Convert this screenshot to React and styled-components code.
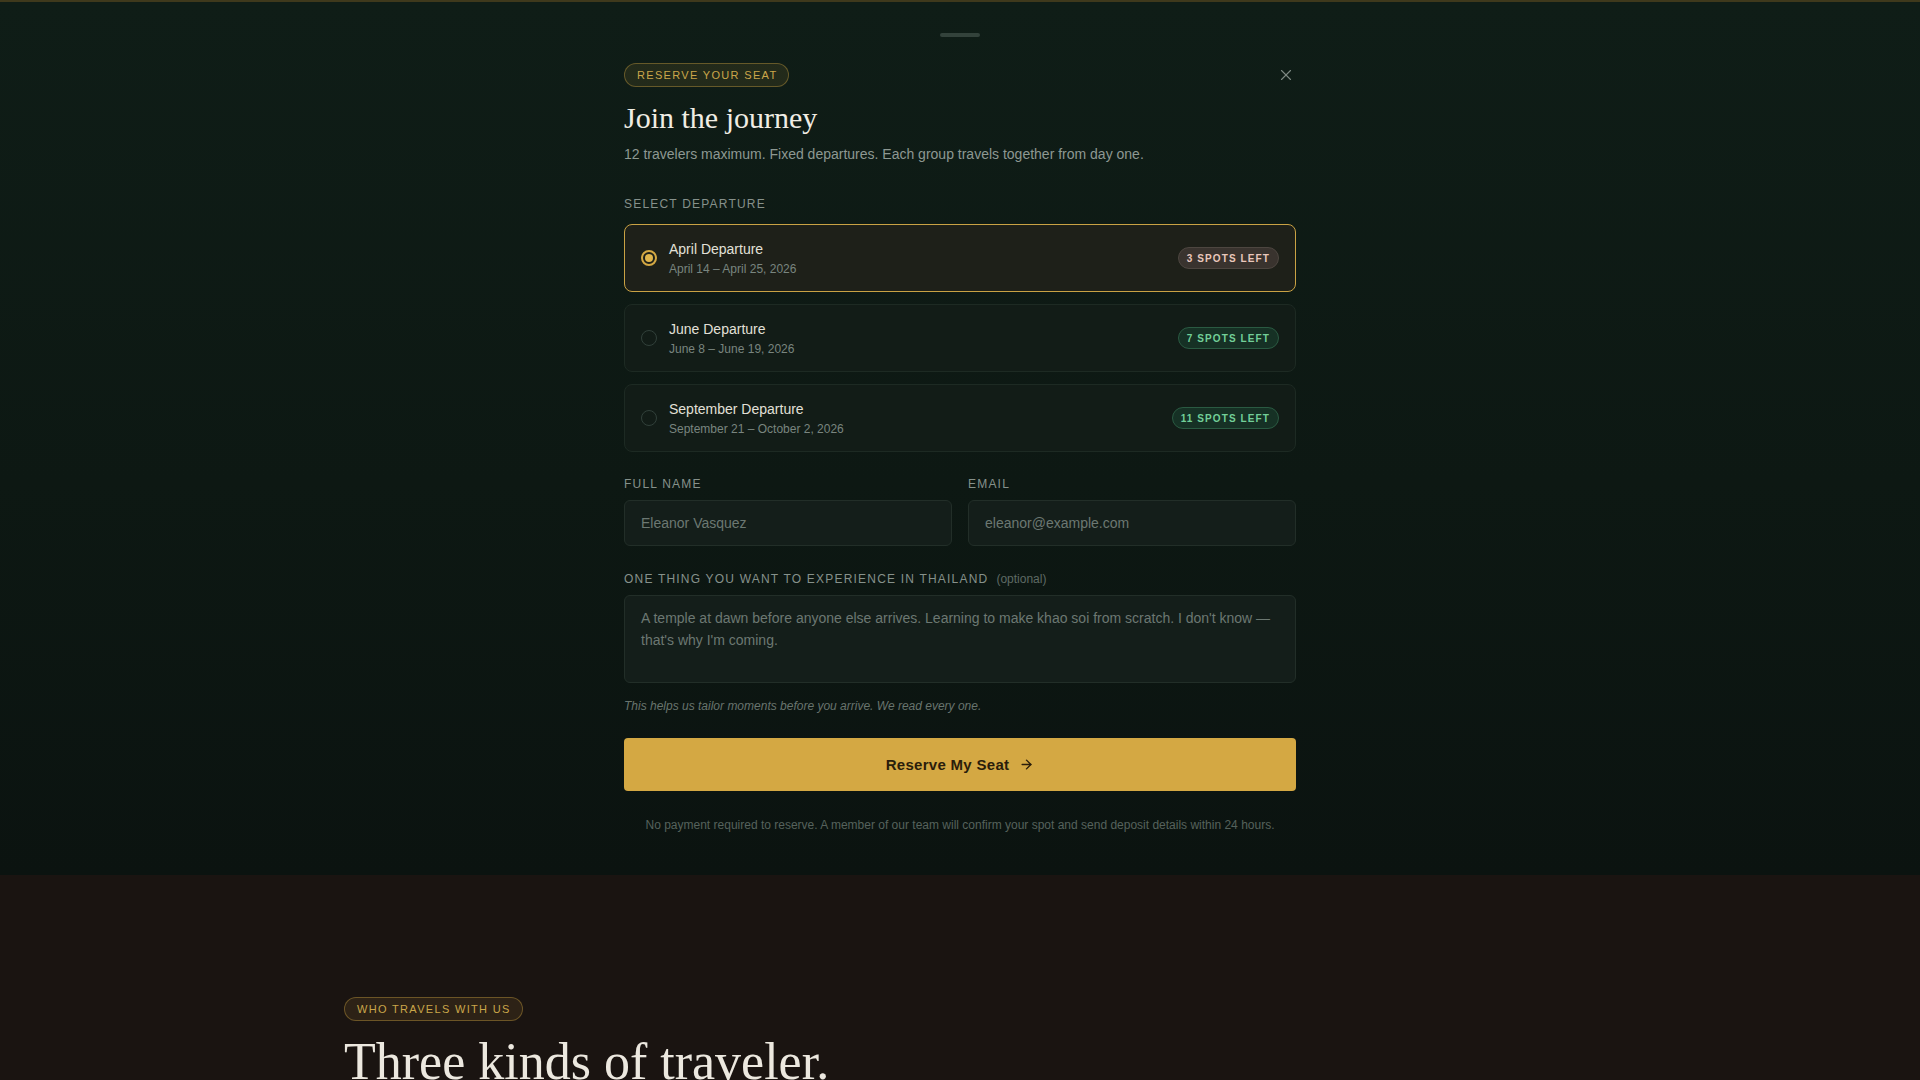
import React, { useState } from 'react';
import styled, { createGlobalStyle } from 'styled-components';
import { X, ArrowRight } from 'lucide-react';

const GlobalStyle = createGlobalStyle`
  * {
    box-sizing: border-box;
  }

  body {
    margin: 0;
    background: #1a1411;
    font-family: "Liberation Sans", Arial, sans-serif;
    color: #e8e6df;
  }
`;

const Sheet = styled.section`
  background: linear-gradient(180deg, #0f1d17 0%, #0d1813 55%, #0b1310 100%);
  border-top: 2px solid rgba(212, 168, 67, 0.26);
  padding: 31px 24px 42px;
`;

const Handle = styled.div`
  width: 40px;
  height: 4px;
  border-radius: 2px;
  background: #33423b;
  margin: 0 auto 26px;
`;

const Panel = styled.div`
  max-width: 672px;
  margin: 0 auto;
`;

const Header = styled.div`
  display: flex;
  align-items: center;
  justify-content: space-between;
`;

const Eyebrow = styled.span`
  display: inline-flex;
  align-items: center;
  height: 24px;
  padding: 0 11px 0 12px;
  border-radius: 999px;
  border: 1px solid rgba(212, 168, 67, 0.38);
  background: rgba(212, 168, 67, 0.1);
  color: #caa64a;
  font-size: 11px;
  letter-spacing: 0.12em;
  text-transform: uppercase;
`;

const CloseButton = styled.button`
  width: 20px;
  height: 20px;
  padding: 0;
  border: none;
  background: none;
  color: #7d8983;
  display: flex;
  align-items: center;
  justify-content: center;
  cursor: pointer;
`;

const Title = styled.h2`
  margin: 13px 0 0;
  font-family: "Liberation Serif", "Times New Roman", serif;
  font-weight: 400;
  font-size: 30px;
  line-height: 36px;
  color: #f0ede4;
`;

const Subtitle = styled.p`
  margin: 8px 0 0;
  font-size: 14px;
  line-height: 20px;
  color: #8d9892;
`;

const FieldLabel = styled.div`
  margin-top: ${(p) => p.$top || 24}px;
  margin-bottom: ${(p) => p.$bottom || 8}px;
  font-size: 12px;
  line-height: 16px;
  letter-spacing: 0.1em;
  text-transform: uppercase;
  color: #86918b;
`;

const Optional = styled.span`
  margin-left: 8px;
  font-size: 12px;
  letter-spacing: 0;
  text-transform: none;
  color: #5e6a64;
`;

const Options = styled.div`
  display: flex;
  flex-direction: column;
  gap: 12px;
`;

const Option = styled.label`
  display: flex;
  align-items: center;
  gap: 12px;
  padding: 14px 16px;
  border-radius: 8px;
  cursor: pointer;
  border: 1px solid ${(p) => (p.$active ? '#c9a244' : '#1d2a23')};
  background: ${(p) => (p.$active ? '#1e2019' : '#121c17')};
`;

const Radio = styled.span`
  width: 16px;
  height: 16px;
  border-radius: 50%;
  flex-shrink: 0;
  display: flex;
  align-items: center;
  justify-content: center;
  border: ${(p) => (p.$active ? '2px solid #d4a843' : '1.5px solid #31403a')};

  &::after {
    content: '';
    width: 8px;
    height: 8px;
    border-radius: 50%;
    background: ${(p) => (p.$active ? '#e0b54c' : 'transparent')};
  }
`;

const OptionInfo = styled.div`
  flex: 1;
`;

const OptionName = styled.div`
  font-size: 14px;
  line-height: 20px;
  color: #e2e0d8;
`;

const OptionDates = styled.div`
  margin-top: 2px;
  font-size: 12px;
  line-height: 16px;
  color: #79857f;
`;

const Spots = styled.span`
  display: inline-flex;
  align-items: center;
  height: 22px;
  padding: 0 8px;
  border-radius: 999px;
  font-size: 10px;
  font-weight: 700;
  letter-spacing: 0.11em;
  border: 1px solid ${(p) => (p.$low ? '#4d4640' : '#2a5a42')};
  background: ${(p) => (p.$low ? '#39332e' : '#163125')};
  color: ${(p) => (p.$low ? '#e9c7bb' : '#72cf98')};
`;

const Row = styled.div`
  display: grid;
  grid-template-columns: 1fr 1fr;
  gap: 16px;
`;

const Field = styled.div`
  display: flex;
  flex-direction: column;
`;

const Input = styled.input`
  height: 46px;
  padding: 0 16px;
  border-radius: 6px;
  border: 1px solid #222e28;
  background: #141e1a;
  font-family: inherit;
  font-size: 14px;
  color: #e8e6df;
  outline: none;

  &::placeholder {
    color: #6c7872;
  }
`;

const TextArea = styled.textarea`
  display: block;
  width: 100%;
  height: 88px;
  padding: 11px 16px;
  border-radius: 6px;
  border: 1px solid #222e28;
  background: #141e1a;
  font-family: inherit;
  font-size: 14px;
  line-height: 22px;
  color: #e8e6df;
  resize: none;
  outline: none;

  &::placeholder {
    color: #6c7872;
  }
`;

const Hint = styled.p`
  margin: 14px 0 0;
  font-size: 12px;
  line-height: 18px;
  font-style: italic;
  color: #68746e;
`;

const SubmitButton = styled.button`
  width: 100%;
  height: 53px;
  margin-top: 23px;
  border: none;
  border-radius: 4px;
  background: #d4a843;
  color: #2a1d0b;
  font-family: inherit;
  font-size: 15px;
  font-weight: 700;
  letter-spacing: 0.02em;
  display: flex;
  align-items: center;
  justify-content: center;
  gap: 10px;
  cursor: pointer;
`;

const Note = styled.p`
  margin: 26px 0 0;
  text-align: center;
  font-size: 12px;
  line-height: 16px;
  color: #56625c;
`;

const Audience = styled.section`
  background: #1a1411;
  padding: 122px 24px 160px;
`;

const Container = styled.div`
  max-width: 1232px;
  margin: 0 auto;
`;

const SectionTitle = styled.h2`
  margin: 12px 0 0;
  font-family: "Liberation Serif", "Times New Roman", serif;
  font-weight: 400;
  font-size: 52px;
  line-height: 1.1;
  color: #ece8df;
`;

const departures = [
  { id: 'apr', name: 'April Departure', dates: 'April 14 – April 25, 2026', spots: 3 },
  { id: 'jun', name: 'June Departure', dates: 'June 8 – June 19, 2026', spots: 7 },
  { id: 'sep', name: 'September Departure', dates: 'September 21 – October 2, 2026', spots: 11 },
];

const App = () => {
  const [selected, setSelected] = useState('apr');

  return (
    <>
      <GlobalStyle />
      <Sheet>
        <Handle />
        <Panel>
          <Header>
            <Eyebrow>Reserve your seat</Eyebrow>
            <CloseButton aria-label="Close">
              <X size={18} strokeWidth={1.5} />
            </CloseButton>
          </Header>
          <Title>Join the journey</Title>
          <Subtitle>12 travelers maximum. Fixed departures. Each group travels together from day one.</Subtitle>

          <FieldLabel $top={32} $bottom={12}>Select departure</FieldLabel>
          <Options>
            {departures.map((d) => (
              <Option key={d.id} $active={selected === d.id} onClick={() => setSelected(d.id)}>
                <Radio $active={selected === d.id} />
                <OptionInfo>
                  <OptionName>{d.name}</OptionName>
                  <OptionDates>{d.dates}</OptionDates>
                </OptionInfo>
                <Spots $low={d.spots <= 3}>{d.spots} SPOTS LEFT</Spots>
              </Option>
            ))}
          </Options>

          <Row>
            <Field>
              <FieldLabel>Full name</FieldLabel>
              <Input placeholder="Eleanor Vasquez" />
            </Field>
            <Field>
              <FieldLabel>Email</FieldLabel>
              <Input type="email" placeholder="eleanor@example.com" />
            </Field>
          </Row>

          <FieldLabel $top={25}>
            One thing you want to experience in Thailand
            <Optional>(optional)</Optional>
          </FieldLabel>
          <TextArea placeholder="A temple at dawn before anyone else arrives. Learning to make khao soi from scratch. I don't know — that's why I'm coming." />
          <Hint>This helps us tailor moments before you arrive. We read every one.</Hint>

          <SubmitButton>
            Reserve My Seat
            <ArrowRight size={15} strokeWidth={2.25} />
          </SubmitButton>
          <Note>
            No payment required to reserve. A member of our team will confirm your spot and send deposit details within 24 hours.
          </Note>
        </Panel>
      </Sheet>

      <Audience>
        <Container>
          <Eyebrow>Who travels with us</Eyebrow>
          <SectionTitle>Three kinds of traveler.</SectionTitle>
        </Container>
      </Audience>
    </>
  );
};

export default App;
